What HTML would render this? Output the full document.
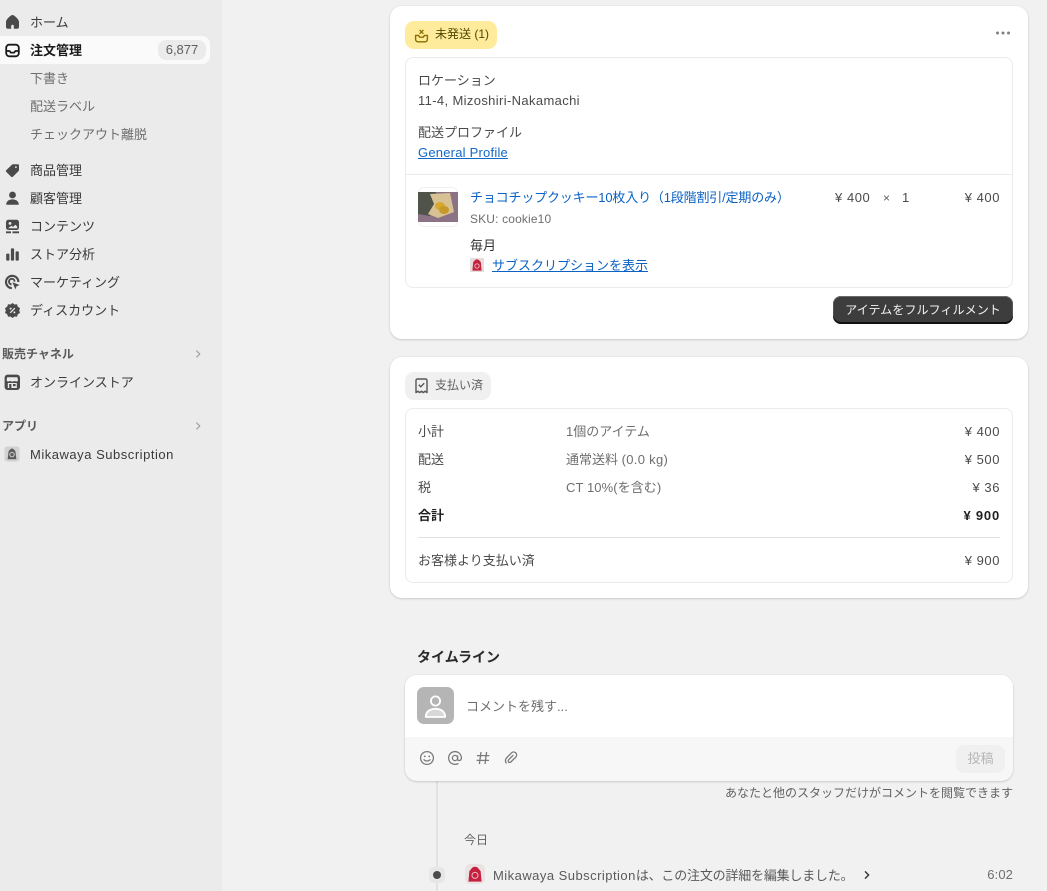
<!DOCTYPE html>
<html lang="ja"><head><meta charset="utf-8"><style>
html,body{margin:0;padding:0;width:1047px;height:891px;overflow:hidden;background:#f1f1f1}
body{position:relative;font-family:"Liberation Sans","Noto Sans CJK JP",sans-serif;font-size:13px;color:#4a4a4a}
.t{position:absolute;white-space:nowrap;line-height:20px}
.b{position:absolute;box-sizing:border-box}
.card{position:absolute;background:#fff;border-radius:12px;box-sizing:border-box;box-shadow:0 1px 2px rgba(0,0,0,.14),0 0 0 1px rgba(0,0,0,.025)}
.in{position:absolute;background:#fff;border:1px solid #ebebeb;border-radius:8px;box-sizing:border-box}
.n{color:#3a3a3a;left:30px}.s{color:#6e6e6e;left:30px}
a{color:#0b62c4;text-underline-offset:1px}
svg{position:absolute}
.r{right:47px;text-align:right;letter-spacing:.55px}
</style></head><body>
<div class="b" style="left:0;top:0;width:222px;height:891px;background:#ebebeb"></div>
<div class="b" style="left:0;top:36px;width:210px;height:28px;background:#fafafa;border-radius:0 8px 8px 0"></div>
<div class="b" style="left:158px;top:40px;width:48px;height:20px;background:#ebebeb;border-radius:8px"></div>
<div class="t" style="left:158px;top:40px;width:48px;text-align:center;color:#5e5e5e">6,877</div>

<svg style="left:4px;top:14px" width="17" height="17" viewBox="0 0 17 17"><path d="M8.5 1C7 1 2.2 5 2 7.6V12.8a2 2 0 0 0 2 2H7.2V12a1.3 1.3 0 0 1 2.6 0V14.8H13a2 2 0 0 0 2-2V7.6C14.8 5 10 1 8.5 1z" fill="#4a4a4a"/></svg>
<svg style="left:4px;top:42px" width="17" height="17" viewBox="0 0 17 17"><rect x="2.2" y="2.7" width="12.6" height="11.6" rx="3" fill="none" stroke="#1a1a1a" stroke-width="1.8"/><path d="M2.5 9H5.6L6.8 10.6H10.2L11.4 9H14.5" fill="none" stroke="#1a1a1a" stroke-width="1.7"/></svg>
<svg style="left:4px;top:162px" width="17" height="17" viewBox="0 0 17 17"><path d="M9.2 2.2H14a1 1 0 0 1 1 1V8a1.5 1.5 0 0 1-.5 1.1L9 14.6a1.4 1.4 0 0 1-2 0L2.4 10a1.4 1.4 0 0 1 0-2L7.9 2.7a2 2 0 0 1 1.3-.5z" fill="#4a4a4a"/><circle cx="11.9" cy="5.1" r=".9" fill="#ebebeb"/></svg>
<svg style="left:4px;top:190px" width="17" height="17" viewBox="0 0 17 17"><circle cx="8.5" cy="5" r="3.4" fill="#4a4a4a"/><path d="M2.2 14.8C2.2 11.2 5 9.4 8.5 9.4s6.3 1.8 6.3 5.4z" fill="#4a4a4a"/></svg>
<svg style="left:4px;top:218px" width="17" height="17" viewBox="0 0 17 17"><rect x="2" y="1.8" width="13" height="10.2" rx="2.4" fill="#4a4a4a"/><circle cx="6" cy="5.4" r="1.4" fill="#ebebeb"/><path d="M4 10.2 7.4 7.8 9 9l2.4-2.2L13.2 8.6V10.2z" fill="#ebebeb"/><path d="M2 14.3H7M8.5 14.3H15" stroke="#4a4a4a" stroke-width="1.8"/></svg>
<svg style="left:4px;top:246px" width="17" height="17" viewBox="0 0 17 17"><rect x="2.2" y="7.6" width="3.2" height="7" rx=".8" fill="#4a4a4a"/><rect x="6.9" y="2.4" width="3.2" height="12.2" rx=".8" fill="#4a4a4a"/><rect x="11.6" y="5.4" width="3.2" height="9.2" rx=".8" fill="#4a4a4a"/></svg>
<svg style="left:4px;top:274px" width="17" height="17" viewBox="0 0 17 17"><path d="M7.8 14.2A6.2 6.2 0 1 1 14.4 8" fill="none" stroke="#4a4a4a" stroke-width="2.1"/><path d="M7.6 10.4A2.8 2.8 0 1 1 10.6 7.6" fill="none" stroke="#4a4a4a" stroke-width="1.9"/><path d="M8.4 8.2 15.6 11 12.6 12.2 11.4 15.4z" fill="#4a4a4a"/></svg>
<svg style="left:4px;top:302px" width="17" height="17" viewBox="0 0 17 17"><path d="M8.5 1 10.5 2.5 13 2.3 13.8 4.7 16 6.1 15.2 8.5 16 10.9 13.8 12.3 13 14.7 10.5 14.5 8.5 16 6.5 14.5 4 14.7 3.2 12.3 1 10.9 1.8 8.5 1 6.1 3.2 4.7 4 2.3 6.5 2.5z" fill="#4a4a4a"/><path d="M6.2 10.8 10.8 6.2" stroke="#ebebeb" stroke-width="1.2"/><circle cx="6.6" cy="6.6" r="1" fill="#ebebeb"/><circle cx="10.4" cy="10.4" r="1" fill="#ebebeb"/></svg>
<svg style="left:4px;top:374px" width="17" height="17" viewBox="0 0 17 17"><rect x="0.6" y="0.6" width="15.4" height="15.4" rx="3" fill="#4a4a4a"/><path d="M3.2 3.2H13.4L14 6.2C13.4 7.8 11.4 7.8 10.6 6.8 10 7.8 6.8 7.8 6 6.8 5.2 7.8 3.2 7.8 2.6 6.2z" fill="#ebebeb"/><rect x="3.8" y="9" width="9" height="5" fill="#ebebeb"/><rect x="5.2" y="10" width="2.2" height="4" fill="#4a4a4a"/><rect x="9" y="10" width="2.6" height="2.2" fill="#4a4a4a"/></svg>
<svg style="left:4px;top:446px" width="16" height="16" viewBox="0 0 16 16"><rect x="0.5" y="0.5" width="15" height="15" rx="2.5" fill="#d2d2d2"/><path d="M3.6 13.2 4.6 5.2C6 3.6 6.4 2.6 8 2.6s2 1 3.4 2.6l1 8z" fill="#5c5c5c"/><circle cx="8" cy="8.6" r="2.2" fill="none" stroke="#d2d2d2" stroke-width="1"/></svg>

<div class="t n" style="top:13px">ホーム</div>
<div class="t" style="left:30px;top:41px;color:#1a1a1a;font-weight:700">注文管理</div>
<div class="t s" style="top:69px">下書き</div>
<div class="t s" style="top:97px">配送ラベル</div>
<div class="t s" style="top:125px">チェックアウト離脱</div>
<div class="t n" style="top:161px">商品管理</div>
<div class="t n" style="top:189px">顧客管理</div>
<div class="t n" style="top:217px">コンテンツ</div>
<div class="t n" style="top:245px">ストア分析</div>
<div class="t n" style="top:273px">マーケティング</div>
<div class="t n" style="top:301px">ディスカウント</div>
<div class="t" style="left:2px;top:344px;font-size:12px;font-weight:700;color:#5a5a5a">販売チャネル</div>
<svg style="left:192px;top:348px" width="12" height="12" viewBox="0 0 12 12"><path d="M4.4 2.6 7.8 6 4.4 9.4" fill="none" stroke="#9a9a9a" stroke-width="1.1"/></svg>
<div class="t n" style="top:373px">オンラインストア</div>
<div class="t" style="left:2px;top:416px;font-size:12px;font-weight:700;color:#5a5a5a">アプリ</div>
<svg style="left:192px;top:420px" width="12" height="12" viewBox="0 0 12 12"><path d="M4.4 2.6 7.8 6 4.4 9.4" fill="none" stroke="#9a9a9a" stroke-width="1.1"/></svg>
<div class="t n" style="top:445px;letter-spacing:.52px">Mikawaya Subscription</div>

<!-- Card 1 -->
<div class="card" style="left:390px;top:6px;width:638px;height:333px"></div>
<div class="b" style="left:405px;top:21px;width:92px;height:28px;background:#ffeb9c;border-radius:9px"></div>
<svg style="left:413px;top:27px" width="17" height="17" viewBox="0 0 17 17"><path d="M2.6 8.4V12.4A2.4 2.4 0 0 0 5 14.8H12A2.4 2.4 0 0 0 14.4 12.4V8.4H11.4L10.4 10.2H6.6L5.6 8.4z" fill="none" stroke="#8a6d00" stroke-width="1.4" stroke-linejoin="round"/><path d="M6.6 3 10.4 6.8M10.4 3 6.6 6.8" stroke="#8a6d00" stroke-width="1.3"/></svg>
<div class="t" style="left:435px;top:24px;font-size:12px;color:#4f4700">未発送 (1)</div>
<svg style="left:995px;top:29px" width="16" height="8" viewBox="0 0 16 8"><circle cx="2.5" cy="4" r="1.5" fill="#808080"/><circle cx="8" cy="4" r="1.5" fill="#808080"/><circle cx="13.5" cy="4" r="1.5" fill="#808080"/></svg>
<div class="in" style="left:405px;top:57px;width:608px;height:231px"></div>
<div class="b" style="left:406px;top:174px;width:606px;height:1px;background:#ebebeb"></div>
<div class="t" style="left:418px;top:71px">ロケーション</div>
<div class="t" style="left:418px;top:91px;letter-spacing:.36px">11-4, Mizoshiri-Nakamachi</div>
<div class="t" style="left:418px;top:123px">配送プロファイル</div>
<div class="t" style="left:418px;top:143px;letter-spacing:.22px"><a href="#" style="color:#1268c8">General Profile</a></div>
<div class="b" style="left:418px;top:187px;width:40px;height:40px;border:1px solid #f0f0f0;border-radius:6px;background:#fff"></div>
<svg style="left:418px;top:192px" width="40" height="30" viewBox="0 0 40 30"><rect width="40" height="30" fill="#8b7284"/><path d="M0 0H18L16 14 12 24 0 22z" fill="#505349"/><path d="M12 2 32 1 36 20 20 26 10 22 16 12z" fill="#d8c193"/><ellipse cx="22" cy="14" rx="5" ry="4" fill="#d6a92e"/><ellipse cx="26" cy="18" rx="5" ry="4" fill="#c6992a"/></svg>
<div class="t" style="left:470px;top:188px;color:#0b62c4;letter-spacing:-.17px">チョコチップクッキー10枚入り（1段階割引/定期のみ）</div>
<div class="t" style="left:470px;top:209px;font-size:12px;color:#6e6e6e;letter-spacing:.15px">SKU: cookie10</div>
<div class="t" style="left:470px;top:236px;color:#303030">毎月</div>
<svg style="left:470px;top:258px" width="14" height="14" viewBox="0 0 14 14"><rect width="14" height="14" fill="#e6dcdc"/><path d="M2.4 12.6 3.2 4C4.6 3 5 1.4 7 1.4S9.4 3 10.8 4l.8 8.6z" fill="#c3213f"/><circle cx="7" cy="8" r="2.2" fill="none" stroke="#f0b8c0" stroke-width=".9"/></svg>
<div class="t" style="left:492px;top:256px"><a href="#" style="color:#0b62c4">サブスクリプションを表示</a></div>
<div class="t" style="left:835px;top:188px;letter-spacing:.55px">¥ 400</div>
<div class="t" style="left:883px;top:188px;font-size:12px;color:#5e5e5e">×</div>
<div class="t" style="left:902px;top:188px">1</div>
<div class="t r" style="top:188px">¥ 400</div>
<div class="b" style="left:833px;top:296px;width:180px;height:28px;border-radius:8px;background:#3d3d3d;box-shadow:inset 0 1px 0 #6a6a6a,inset 0 -2px 0 #111,inset 1px 0 0 #555,inset -1px 0 0 #555"></div>
<div class="t" style="left:833px;top:300px;width:180px;text-align:center;color:#f2f2f2;font-size:12.1px">アイテムをフルフィルメント</div>

<!-- Card 2 -->
<div class="card" style="left:390px;top:357px;width:638px;height:241px"></div>
<div class="b" style="left:405px;top:372px;width:86px;height:28px;background:#f0f0f0;border-radius:9px"></div>
<svg style="left:413px;top:377px" width="17" height="18" viewBox="0 0 17 18"><path d="M3 15.6V3.4A1.4 1.4 0 0 1 4.4 2H12.6A1.4 1.4 0 0 1 14 3.4V15.6L12 14.2 10.2 15.6 8.5 14.2 6.8 15.6 5 14.2z" fill="none" stroke="#555" stroke-width="1.4" stroke-linejoin="round"/><path d="M5.8 7.8 7.8 9.8 11.2 6.2" fill="none" stroke="#555" stroke-width="1.4"/></svg>
<div class="t" style="left:435px;top:375px;font-size:12px;color:#616161">支払い済</div>
<div class="in" style="left:405px;top:408px;width:608px;height:175px"></div>
<div class="t" style="left:418px;top:422px">小計</div>
<div class="t" style="left:566px;top:422px;color:#6e6e6e">1個のアイテム</div>
<div class="t r" style="top:422px">¥ 400</div>
<div class="t" style="left:418px;top:450px">配送</div>
<div class="t" style="left:566px;top:450px;color:#6e6e6e">通常送料 <span style="letter-spacing:.3px">(0.0 kg)</span></div>
<div class="t r" style="top:450px">¥ 500</div>
<div class="t" style="left:418px;top:478px">税</div>
<div class="t" style="left:566px;top:478px;color:#6e6e6e;letter-spacing:.08px">CT 10%(を含む)</div>
<div class="t r" style="top:478px">¥ 36</div>
<div class="t" style="left:418px;top:506px;font-weight:700;color:#1f1f1f">合計</div>
<div class="t r" style="top:506px;font-weight:700;color:#1f1f1f;letter-spacing:.8px">¥ 900</div>
<div class="b" style="left:418px;top:537px;width:582px;height:1px;background:#e3e3e3"></div>
<div class="t" style="left:418px;top:551px">お客様より支払い済</div>
<div class="t r" style="top:551px">¥ 900</div>

<!-- Timeline -->
<div class="t" style="left:417px;top:647px;font-size:14px;font-weight:700;color:#2a2a2a">タイムライン</div>
<div class="b" style="left:436px;top:780px;width:2px;height:111px;background:#e1e1e1"></div>
<div class="card" style="left:405px;top:675px;width:608px;height:106px;background:#f7f7f7"></div>
<div class="b" style="left:405px;top:675px;width:608px;height:62px;background:#fff;border-radius:12px 12px 0 0"></div>
<div class="b" style="left:417px;top:687px;width:37px;height:37px;background:#b5b5b5;border-radius:7px"></div>
<svg style="left:417px;top:687px" width="37" height="37" viewBox="0 0 37 37"><circle cx="18.5" cy="14" r="4.6" fill="none" stroke="#fff" stroke-width="1.8"/><path d="M8.8 30C8.8 24.6 13 21.8 18.5 21.8S28.2 24.6 28.2 30z" fill="#d8d8d8" stroke="#fff" stroke-width="1.8" stroke-linejoin="round"/></svg>
<div class="t" style="left:466px;top:697px;color:#6e6e6e">コメントを残す...</div>
<svg style="left:419px;top:750px" width="16" height="16" viewBox="0 0 16 16"><circle cx="8" cy="8" r="6.4" fill="none" stroke="#7a7a7a" stroke-width="1.3"/><circle cx="5.8" cy="6.4" r=".9" fill="#7a7a7a"/><circle cx="10.2" cy="6.4" r=".9" fill="#7a7a7a"/><path d="M4.8 9.2C5.6 11.6 10.4 11.6 11.2 9.2" fill="none" stroke="#7a7a7a" stroke-width="1.3"/></svg>
<svg style="left:447px;top:750px" width="16" height="16" viewBox="0 0 16 16"><circle cx="8" cy="8" r="2.6" fill="none" stroke="#7a7a7a" stroke-width="1.3"/><path d="M10.6 5.4V9.2C10.6 11.2 14.4 11 14.4 8A6.4 6.4 0 1 0 11.4 13.4" fill="none" stroke="#7a7a7a" stroke-width="1.3"/></svg>
<svg style="left:475px;top:750px" width="16" height="16" viewBox="0 0 16 16"><path d="M6 2 4.4 14M11.6 2 10 14M2 5.6H14.4M1.6 10.4H14" fill="none" stroke="#7a7a7a" stroke-width="1.3"/></svg>
<svg style="left:503px;top:750px" width="16" height="16" viewBox="0 0 16 16"><path d="M10 5.4 5.6 9.8A1.5 1.5 0 0 0 7.8 12L13 6.8A3 3 0 0 0 8.8 2.6L3.4 8A4.4 4.4 0 0 0 3.2 13" fill="none" stroke="#7a7a7a" stroke-width="1.3" stroke-linecap="round"/></svg>
<div class="b" style="left:956px;top:745px;width:49px;height:28px;background:#f0f0f0;border-radius:8px"></div>
<div class="t" style="left:956px;top:749px;width:49px;text-align:center;color:#b5b5b5">投稿</div>
<div class="t" style="right:34px;top:783px;color:#616161;font-size:12px">あなたと他のスタッフだけがコメントを閲覧できます</div>
<div class="t" style="left:464px;top:830px;font-size:12px;color:#616161">今日</div>
<div class="b" style="left:429px;top:867px;width:16px;height:16px;background:#e6e6e6;border-radius:5px"></div>
<div class="b" style="left:433px;top:871px;width:8px;height:8px;background:#4a4a4a;border-radius:50%"></div>
<div class="b" style="left:465px;top:864px;width:20px;height:20px;background:#ebe3e3;border-radius:5px"></div>
<svg style="left:467px;top:865px" width="16" height="18" viewBox="0 0 16 18"><path d="M1.4 16.6 2.4 6C4 5 4.6 1.8 8 1.8S12 5 13.6 6l1 10.6z" fill="#c3213f"/><circle cx="8" cy="10.4" r="3" fill="none" stroke="#f0b8c0" stroke-width="1"/></svg>
<div class="t" style="left:493px;top:866px;color:#5a5a5a"><span style="letter-spacing:.47px">Mikawaya Subscription</span><span style="letter-spacing:-.2px">は、この注文の詳細を編集しました。</span></div>
<svg style="left:861px;top:869px" width="12" height="12" viewBox="0 0 12 12"><path d="M4 2.4 7.6 6 4 9.6" fill="none" stroke="#333" stroke-width="1.4"/></svg>
<div class="t r" style="top:865px;right:34px;color:#6e6e6e;font-size:13px;letter-spacing:.1px">6:02</div>
</body></html>
